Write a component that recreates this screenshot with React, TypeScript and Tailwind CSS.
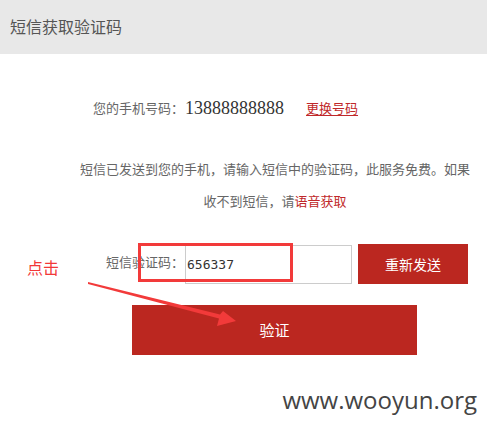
import React from 'react';

const cjk = "font-['Microsoft_YaHei','Noto_Sans_CJK_SC',sans-serif]";

export default function App() {
  return (
    <div className={`relative w-[487px] h-[430px] bg-white overflow-hidden ${cjk}`}>
      <div className="h-[54px] bg-[#e8e8e8] flex items-center pl-[10px] pb-[2px]">
        <h1 className="text-[16px] text-[#555]">短信获取验证码</h1>
      </div>

      <div className="flex items-center mt-[43px] pl-[93px] h-[22px]">
        <span className="text-[13px] text-[#666]">您的手机号码：</span>
        <span className="font-['Liberation_Serif',serif] text-[18px] text-[#333] ml-[1px]">13888888888</span>
        <a href="#" className="ml-[22px] text-[13px] text-[#c0282a] underline underline-offset-2">更换号码</a>
      </div>

      <p className="mt-[34px] ml-[76px] w-[398px] text-center text-[13px] leading-[32px] text-[#666]">
        短信已发送到您的手机，请输入短信中的验证码，此服务免费。如果收不到短信，请<span className="text-[#c0282a]">语音获取</span>
      </p>

      <div className="flex items-center mt-[27px] pl-[106px]">
        <span className="text-[13px] text-[#666] -mt-[5px]">短信验证码：</span>
        <div className="ml-[1px] w-[167px] h-[39px] border border-[#ccc] flex items-center pl-[1px] pt-[2px]">
          <span className="font-['DejaVu_Sans_Mono',monospace] text-[13px] text-[#333]">656337</span>
        </div>
        <button className="ml-[6px] w-[110px] h-[40px] bg-[#bb2720] text-white text-[14px]">重新发送</button>
      </div>

      <div className="pl-[132px] mt-[21px]">
        <button className="w-[285px] h-[50px] bg-[#bb2720] text-white text-[15px]">验证</button>
      </div>

      <div className="flex justify-end pr-[10px] mt-[27px]">
        <span className="font-['Open_Sans',sans-serif] text-[24px] text-[#444]">www.wooyun.org</span>
      </div>

      {/* annotation overlay */}
      <span className="absolute left-[27px] top-[255px] text-[16px] text-[#f23838]">点击</span>
      <div className="absolute left-[138px] top-[243px] w-[155px] h-[39px] border-[3px] border-[#f23a3a]" />
      <svg className="absolute left-0 top-0 pointer-events-none" width="487" height="430">
        <polygon points="88,282 220,314.5 223,311 236,321 217,326 219,318.5 88,284" fill="#f23a3a" />
      </svg>
    </div>
  );
}
